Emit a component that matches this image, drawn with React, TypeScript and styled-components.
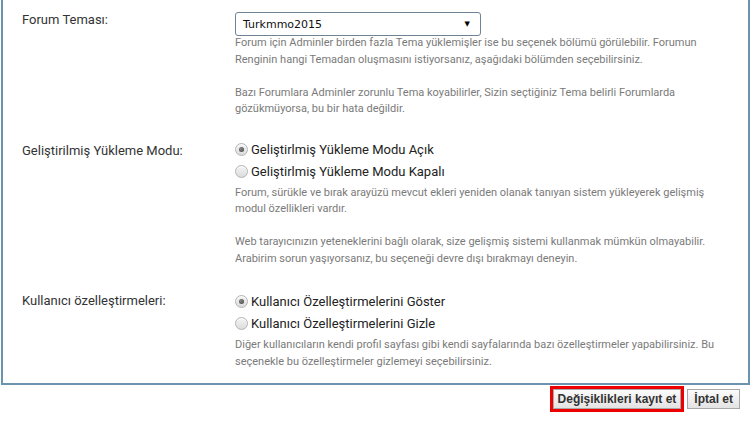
import React from "react";
import styled, { createGlobalStyle } from "styled-components";

const Global = createGlobalStyle`
  html, body {
    margin: 0;
    padding: 0;
    background: #fff;
  }
  body {
    font-family: Roboto, "Noto Sans", sans-serif;
    color: #333;
  }
`;

function App() {
  return (
    <>
      <Global />
      <Panel>
        <Row $top={0}>
          <Label $top={0}>Forum Teması:</Label>
          <Value>
            <Select>
              <span>Turkmmo2015</span>
              <Arrow>▼</Arrow>
            </Select>
            <Desc $top={-1}>
              Forum için Adminler birden fazla Tema yüklemişler ise bu seçenek bölümü görülebilir. Forumun
              <br />
              Renginin hangi Temadan oluşmasını istiyorsanız, aşağıdaki bölümden seçebilirsiniz.
              <br />
              <br />
              Bazı Forumlara Adminler zorunlu Tema koyabilirler, Sizin seçtiğiniz Tema belirli Forumlarda
              <br />
              gözükmüyorsa, bu bir hata değildir.
            </Desc>
          </Value>
        </Row>

        <Row $top={21}>
          <Label $top={4}>Geliştirilmiş Yükleme Modu:</Label>
          <Value>
            <Radio>
              <Dot $checked />
              Geliştirlmiş Yükleme Modu Açık
            </Radio>
            <Radio>
              <Dot />
              Geliştirlmiş Yükleme Modu Kapalı
            </Radio>
            <Desc $top={2}>
              Forum, sürükle ve bırak arayüzü mevcut ekleri yeniden olanak tanıyan sistem yükleyerek gelişmiş
              <br />
              modul özellikleri vardır.
              <br />
              <br />
              Web tarayıcınızın yeteneklerini bağlı olarak, size gelişmiş sistemi kullanmak mümkün olmayabilir.
              <br />
              Arabirim sorun yaşıyorsanız, bu seçeneği devre dışı bırakmayı deneyin.
            </Desc>
          </Value>
        </Row>

        <Row $top={23}>
          <Label $top={3}>Kullanıcı özelleştirmeleri:</Label>
          <Value>
            <Radio>
              <Dot $checked />
              Kullanıcı Özelleştirmelerini Göster
            </Radio>
            <Radio>
              <Dot />
              Kullanıcı Özelleştirmelerini Gizle
            </Radio>
            <Desc $top={3}>
              Diğer kullanıcıların kendi profil sayfası gibi kendi sayfalarında bazı özelleştirmeler yapabilirsiniz. Bu
              <br />
              seçenekle bu özelleştirmeler gizlemeyi seçebilirsiniz.
            </Desc>
          </Value>
        </Row>
      </Panel>

      <Footer>
        <Highlight>
          <Button $pad={4}>Değişiklikleri kayıt et</Button>
        </Highlight>
        <Button $pad={6}>İptal et</Button>
      </Footer>
    </>
  );
}

export default App;

const Panel = styled.div`
  margin-left: 1px;
  width: 749px;
  box-sizing: border-box;
  border: 2px solid #6b93ad;
  border-top: none;
  padding: 12px 0 13px 19px;
  display: flex;
  flex-direction: column;
`;

const Row = styled.div<{ $top: number }>`
  margin-top: ${(p) => p.$top}px;
  display: grid;
  grid-template-columns: 213px 1fr;
  align-items: start;
`;

const Label = styled.div<{ $top: number }>`
  margin-top: ${(p) => p.$top}px;
  font-size: 13px;
  line-height: 16px;
  color: #333;
`;

const Value = styled.div`
  display: flex;
  flex-direction: column;
  align-items: flex-start;
`;

const Select = styled.div`
  width: 246px;
  height: 24px;
  box-sizing: border-box;
  border: 1px solid #6f8394;
  border-radius: 3px;
  padding: 0 7px;
  display: flex;
  align-items: center;
  justify-content: space-between;
  font-family: "DejaVu Sans", Verdana, sans-serif;
  font-size: 11px;
  color: #111;
`;

const Arrow = styled.span`
  font-size: 7px;
  color: #000;
  margin-right: 3px;
`;

const Desc = styled.div<{ $top: number }>`
  margin-top: ${(p) => p.$top}px;
  font-size: 11px;
  line-height: 16.5px;
  color: #7a7a7a;
  white-space: nowrap;
`;

const Radio = styled.div`
  display: flex;
  align-items: center;
  gap: 3px;
  height: 22px;
  font-size: 13px;
  color: #222;
`;

const Dot = styled.span<{ $checked?: boolean }>`
  position: relative;
  width: 13px;
  height: 13px;
  box-sizing: border-box;
  border-radius: 50%;
  border: 1px solid #b4b4b4;
  background: linear-gradient(#f4f4f4, #dcdcdc);
  box-shadow: inset 0 1px 1px rgba(255, 255, 255, 0.8);

  &::after {
    content: "";
    display: ${(p) => (p.$checked ? "block" : "none")};
    position: absolute;
    left: 3px;
    top: 3px;
    width: 5px;
    height: 5px;
    border-radius: 50%;
    background: radial-gradient(circle at 40% 40%, #8a8a8a, #3c3c3c);
  }
`;

const Footer = styled.div`
  display: flex;
  justify-content: flex-end;
  align-items: center;
  gap: 3px;
  margin-top: 1px;
  padding-right: 12px;
`;

const Highlight = styled.div`
  display: flex;
  border: 3px solid #ee0000;
`;

const Button = styled.button<{ $pad: number }>`
  font-family: Tahoma, "Liberation Sans", Arial, sans-serif;
  font-weight: bold;
  font-size: 12px;
  color: #333;
  height: 20px;
  padding: 0 ${(p) => p.$pad}px;
  margin: 0;
  border: 1px solid #a8a8a8;
  border-radius: 0;
  background: linear-gradient(#fbfbfb, #e3e3e3);
  cursor: pointer;
`;
